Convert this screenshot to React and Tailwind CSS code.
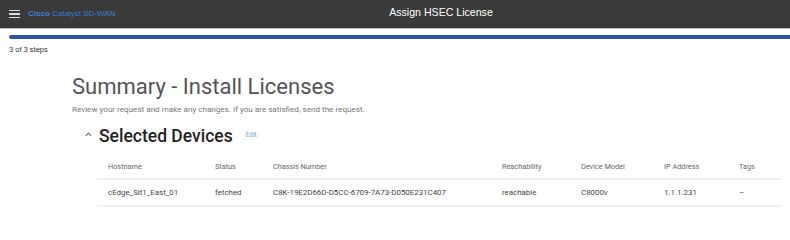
export default function App() {
  const cols = [
    { h: "Hostname", v: "cEdge_Sit1_East_01", w: "w-[107px]" },
    { h: "Status", v: "fetched", w: "w-[58px]" },
    { h: "Chassis Number", v: "C8K-19E2D66D-D5CC-6709-7A73-D050E231C407", w: "w-[229px]" },
    { h: "Reachability", v: "reachable", w: "w-[79px]" },
    { h: "Device Model", v: "C8000v", w: "w-[83px]" },
    { h: "IP Address", v: "1.1.1.231", w: "w-[75px]" },
    { h: "Tags", v: "–", w: "flex-1" },
  ];
  return (
    <div className="w-[790px] h-[216px] bg-white overflow-hidden font-['Roboto',sans-serif]">
      <div className="h-[29px] bg-[#3a3a3a] border-b border-[#bcbcbc] flex items-center relative font-['Liberation_Sans',Arial,sans-serif]">
        <div className="pl-[9px] flex flex-col gap-[2px]">
          <span className="block w-[11px] h-[1.5px] bg-[#d8d8d8]" />
          <span className="block w-[11px] h-[1.5px] bg-[#d8d8d8]" />
          <span className="block w-[11px] h-[1.5px] bg-[#d8d8d8]" />
        </div>
        <div className="ml-[8px] text-[8px] text-[#3f7ad6] whitespace-nowrap">
          <span className="font-bold">Cisco</span> Catalyst SD-WAN
        </div>
        <div className="absolute left-0 right-0 top-0 h-[26px] flex items-center justify-center pl-[92px] text-[10.6px] text-white pointer-events-none">
          Assign HSEC License
        </div>
      </div>
      <div className="pl-[9px] pt-[6px]">
        <div className="h-[4px] bg-[#2c57a6] rounded-l-full" />
        <div className="mt-[6px] text-[7.5px] text-[#333] leading-[10px] font-['Liberation_Sans',Arial,sans-serif]">3 of 3 steps</div>
      </div>
      <div className="pl-[72px] pt-[19px]">
        <div className="text-[22px] leading-[26px] text-[#555] font-['Roboto',sans-serif] font-normal">
          Summary - Install Licenses
        </div>
        <div className="mt-[4px] text-[8.1px] leading-[10px] text-[#777]">
          Review your request and make any changes. If you are satisfied, send the request.
        </div>
        <div className="mt-[11px] flex items-center pl-[12px]">
          <svg width="9" height="9" viewBox="0 0 10 10" className="mr-[6px] mt-[-4px]">
            <path d="M2 6.5 L5 3.5 L8 6.5" fill="none" stroke="#666" strokeWidth="1.2" />
          </svg>
          <span className="text-[17.5px] leading-[22px] text-[#222] font-medium">Selected Devices</span>
          <span className="ml-[13px] text-[6.5px] text-[#63a9dd]">Edit</span>
        </div>
      </div>
      <div className="ml-[97px] mr-[8px] mt-[10px] text-[#444]">
        <div className="flex h-[23px] items-center border-b-2 border-[#f0f0f0] pl-[11px] text-[7.3px] text-[#666]">
          {cols.map((c) => (
            <div key={c.h} className={c.w}>{c.h}</div>
          ))}
        </div>
        <div className="flex h-[27px] items-center border-b-2 border-[#f0f0f0] pl-[11px] text-[7.9px] text-[#444]">
          {cols.map((c) => (
            <div key={c.h} className={`${c.w} whitespace-nowrap`}>{c.v}</div>
          ))}
        </div>
      </div>
    </div>
  );
}
